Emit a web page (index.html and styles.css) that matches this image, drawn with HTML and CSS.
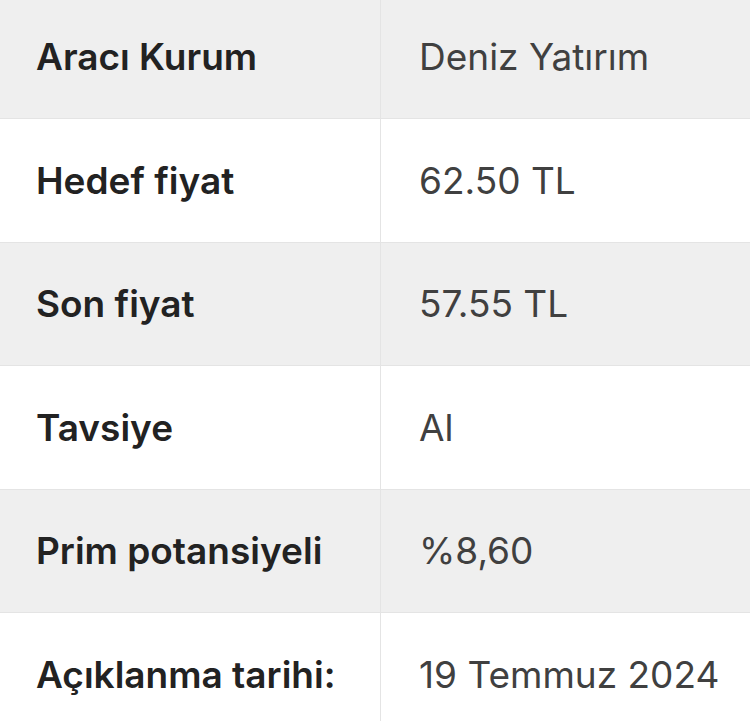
FILE: index.html
```html
<!DOCTYPE html>
<html lang="tr">
<head>
<meta charset="utf-8">
<link rel="stylesheet" href="styles.css">
</head>
<body>
<table class="info">
  <tbody>
    <tr><th>Aracı Kurum</th><td>Deniz Yatırım</td></tr>
    <tr><th>Hedef fiyat</th><td>62.50 TL</td></tr>
    <tr><th>Son fiyat</th><td>57.55 TL</td></tr>
    <tr><th>Tavsiye</th><td>Al</td></tr>
    <tr><th>Prim potansiyeli</th><td>%8,60</td></tr>
    <tr><th>Açıklanma tarihi:</th><td>19 Temmuz 2024</td></tr>
  </tbody>
</table>
</body>
</html>
```
FILE: styles.css
```css
html, body {
  margin: 0;
  padding: 0;
  background: #ffffff;
  overflow: hidden;
}
.info {
  border-collapse: collapse;
  width: 800px;
  margin-top: -5.5px;
  font-family: Inter, "Noto Sans", sans-serif;
  font-size: 37px;
  table-layout: fixed;
}
.info tr {
  height: 123.5px;
}
.info tr:nth-child(odd) {
  background: #efefef;
}
.info th, .info td {
  border: 1px solid #e4e4e4;
  padding: 0 0 0 36px;
  text-align: left;
  vertical-align: middle;
  white-space: nowrap;
}
.info th {
  width: 344px;
  font-weight: 600;
  color: #222222;
  border-left: none;
}
.info td {
  padding-left: 38px;
  font-weight: 400;
  color: #404040;
}
```
